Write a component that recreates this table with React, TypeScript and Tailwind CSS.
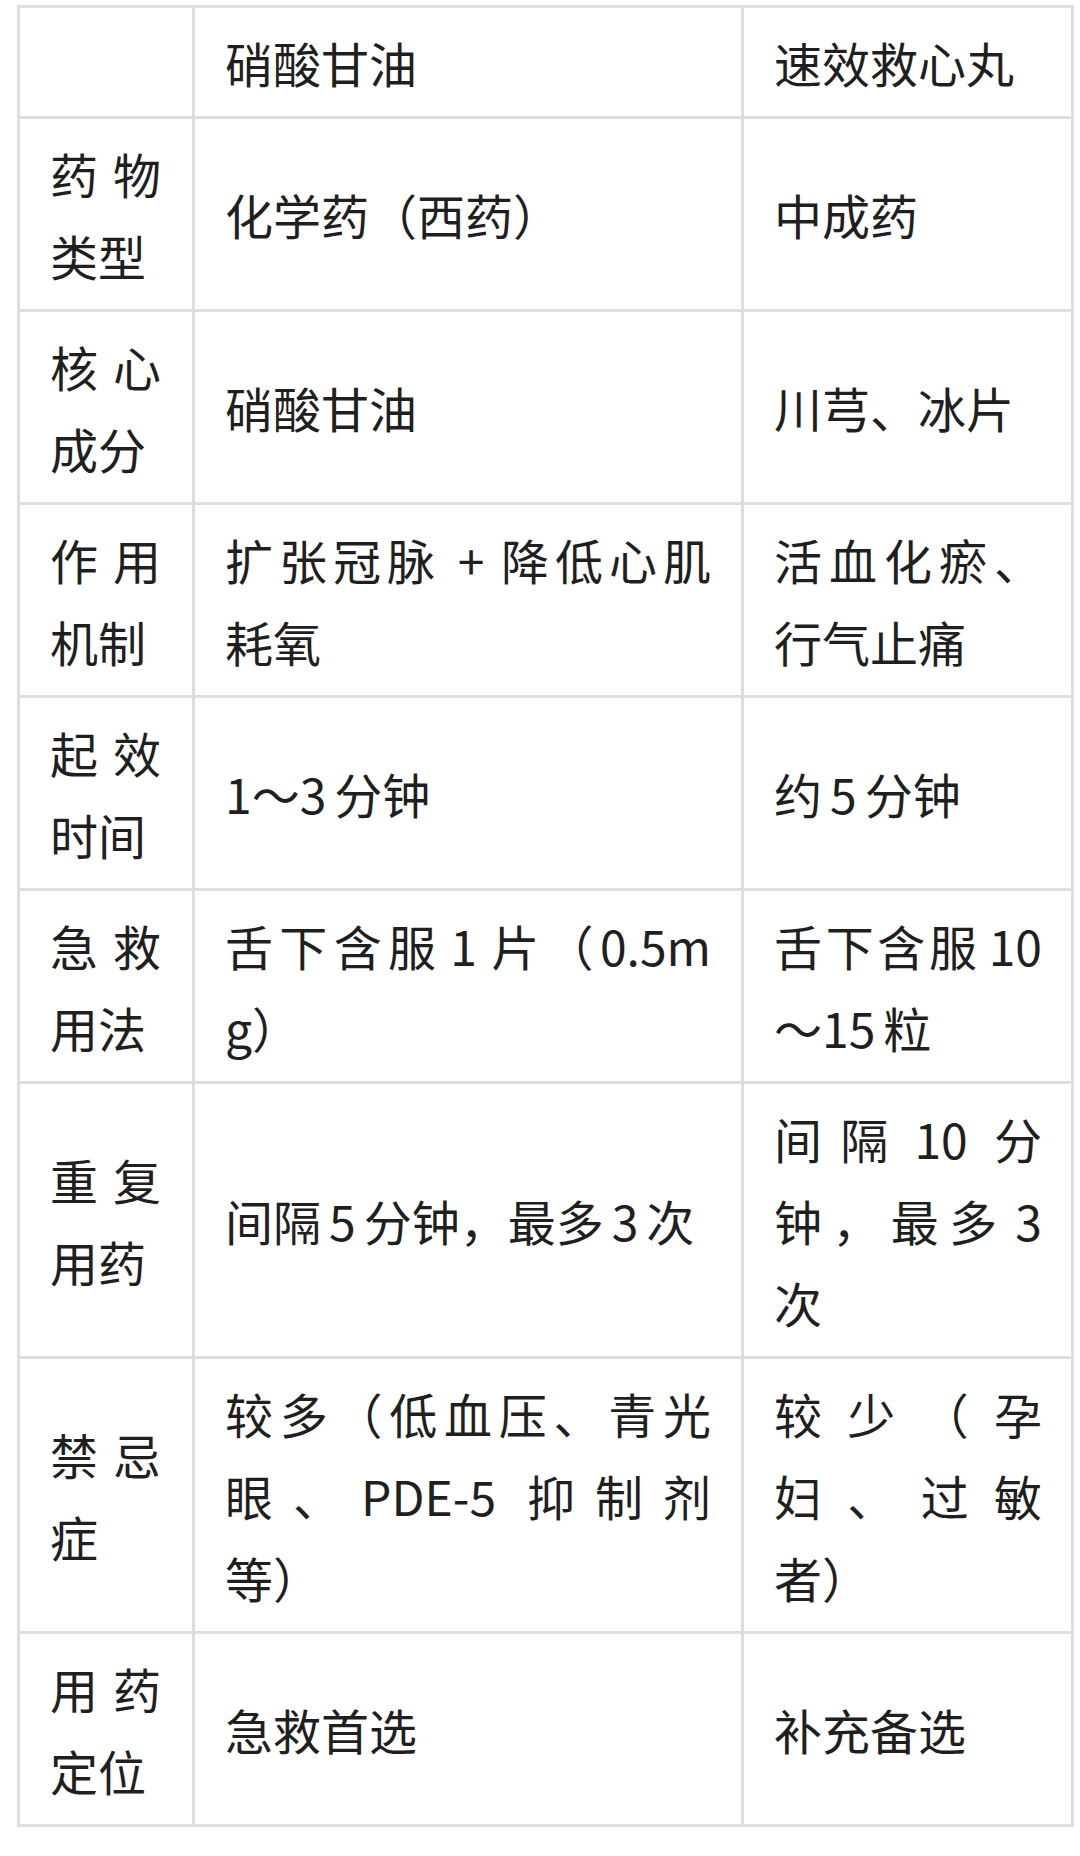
import React from "react"

interface Row {
    label: string[]
    a: string[]
    b: string[]
}

const rows: Row[] = [
    { label: [], a: ["硝酸甘油"], b: ["速效救心丸"] },
    { label: ["药物", "类型"], a: ["化学药（西药）"], b: ["中成药"] },
    { label: ["核心", "成分"], a: ["硝酸甘油"], b: ["川芎、冰片"] },
    { label: ["作用", "机制"], a: ["扩张冠脉 + 降低心肌", "耗氧"], b: ["活血化瘀、", "行气止痛"] },
    { label: ["起效", "时间"], a: ["1～3分钟"], b: ["约5分钟"] },
    { label: ["急救", "用法"], a: ["舌下含服1片（0.5m", "g）"], b: ["舌下含服10", "～15粒"] },
    { label: ["重复", "用药"], a: ["间隔5分钟，最多3次"], b: ["间隔10分", "钟，最多3", "次"] },
    { label: ["禁忌", "症"], a: ["较多（低血压、青光", "眼、PDE-5 抑制剂", "等）"], b: ["较少（孕", "妇、过敏", "者）"] },
    { label: ["用药", "定位"], a: ["急救首选"], b: ["补充备选"] },
]

const isHan = (c: string | undefined) => !!c && /[\u4e00-\u9fff]/.test(c)

// put a little room between digits and the Chinese characters beside them
function spaced(text: string) {
    const parts = text.split(/(\d+)/)
    return parts.map((part, i) => {
        if (!/^\d+$/.test(part)) return part
        const before = parts[i - 1]?.slice(-1)
        const after = parts[i + 1]?.slice(0, 1)
        return (
            <span
                key={i}
                className={`${isHan(before) ? "ml-[8px]" : ""} ${isHan(after) ? "mr-[8px]" : ""}`}
            >
                {part}
            </span>
        )
    })
}

function Lines({ lines }: { lines: string[] }) {
    return (
        <>
            {lines.map((line, i) => (
                <div
                    key={i}
                    className={
                        i < lines.length - 1
                            ? "whitespace-nowrap text-justify [text-align-last:justify]"
                            : "whitespace-nowrap text-left"
                    }
                >
                    {spaced(line)}
                </div>
            ))}
        </>
    )
}

export default function App() {
    return (
        <div className="min-h-[1856px] w-[1080px] bg-white pt-[5px] pl-[17px] font-['Noto_Sans_CJK_SC',sans-serif] text-[48px] leading-[82px] text-[#1f1f1f]">

            <div className="grid w-fit grid-cols-[175px_549px_330px] border-l-[3px] border-t-[3px] border-[#dedede]">

                {rows.map((row, r) => (
                    <React.Fragment key={r}>
                        <div className="flex flex-col justify-center border-r-[3px] border-b-[3px] border-[#dedede] py-[13px] pl-[30px] pr-[31px]">
                            <Lines lines={row.label} />
                        </div>
                        <div className="flex flex-col justify-center border-r-[3px] border-b-[3px] border-[#dedede] py-[13px] px-[30px]">
                            <Lines lines={row.a} />
                        </div>
                        <div className="flex flex-col justify-center border-r-[3px] border-b-[3px] border-[#dedede] py-[13px] pl-[30px] pr-[29px]">
                            <Lines lines={row.b} />
                        </div>
                    </React.Fragment>
                ))}

            </div>

        </div>
    )
}
